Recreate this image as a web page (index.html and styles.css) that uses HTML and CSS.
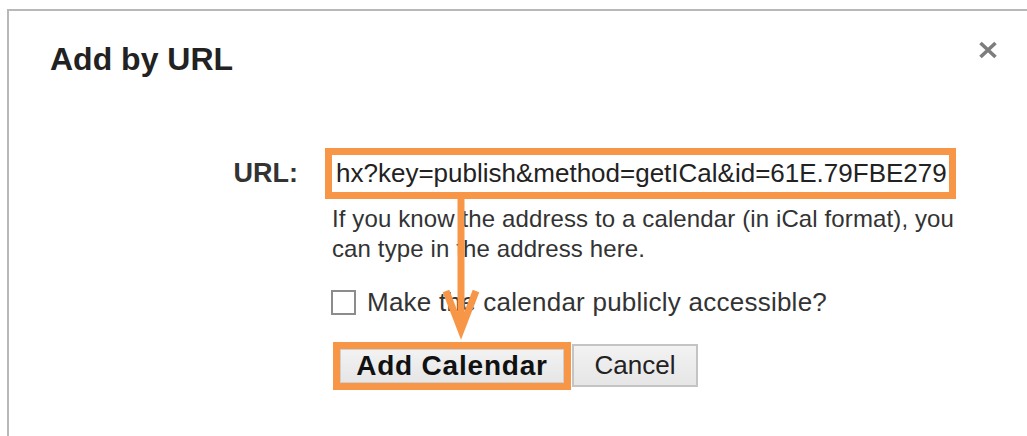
FILE: index.html
```html
<!DOCTYPE html>
<html lang="en">
<head>
<meta charset="utf-8">
<title>Add by URL</title>
<link rel="stylesheet" href="styles.css">
</head>
<body>
  <div class="dialog">
    <div class="dialog-header">
      <h1 class="dialog-title">Add by URL</h1>
      <button class="close" aria-label="Close">
        <svg width="20" height="18" viewBox="0 0 20 18">
          <path d="M2.5 2 L17.5 16 M17.5 2 L2.5 16" stroke="#7d7d7d" stroke-width="3.6" fill="none"/>
        </svg>
      </button>
    </div>

    <form class="url-form">
      <label class="field-label" for="url">URL:</label>
      <div class="url-input highlight" id="url">hx?key=publish&amp;method=getICal&amp;id=61E.79FBE279</div>

      <p class="hint">If you know the address to a calendar (in iCal format), you can type in the address here.</p>

      <label class="check-row">
        <span class="checkbox"></span>
        <span>Make the calendar publicly accessible?</span>
      </label>

      <div class="actions">
        <button type="button" class="btn btn-primary highlight">Add Calendar</button>
        <button type="button" class="btn">Cancel</button>
      </div>
    </form>
  </div>

  <!-- callout arrow from the URL field down to the submit button -->
  <svg class="callout" width="1027" height="436" viewBox="0 0 1027 436">
    <line x1="461" y1="199" x2="461" y2="326" stroke="#f79646" stroke-width="7"/>
    <polyline points="446,291 461,330 476,291" stroke="#f79646" stroke-width="7" fill="none" stroke-linejoin="miter"/>
  </svg>
</body>
</html>
```

FILE: styles.css
```css
* {
  box-sizing: border-box;
}

html, body {
  margin: 0;
  padding: 0;
  background: #ffffff;
  overflow: hidden;
}

body {
  position: relative;
  width: 1027px;
  height: 436px;
  font-family: "Liberation Sans", Arial, sans-serif;
  color: #222222;
}

.dialog {
  margin: 9px 0 0 7px;
  width: 1020px;
  min-height: 440px;
  border-top: 2px solid #b8b8b8;
  border-left: 2px solid #b8b8b8;
  padding: 30px 29px 0 41px;
  background: #ffffff;
}

.dialog-header {
  display: flex;
  justify-content: space-between;
  align-items: flex-start;
}

.dialog-title {
  margin: 0;
  font-size: 32px;
  line-height: 37px;
  font-weight: bold;
  color: #222222;
}

.close {
  border: 0;
  padding: 0;
  margin: 0;
  background: none;
  display: block;
  line-height: 0;
}

.url-form {
  display: grid;
  grid-template-columns: 248px 636px;
  column-gap: 34px;
  margin-top: 77px;
}

.field-label {
  grid-column: 1;
  text-align: right;
  font-size: 27px;
  line-height: 37px;
  font-weight: bold;
  color: #333333;
  align-self: center;
}

.url-input {
  grid-column: 2;
  width: 617px;
  height: 37px;
  padding: 0 4px;
  font-size: 26px;
  line-height: 37px;
  white-space: nowrap;
  overflow: hidden;
  color: #222222;
  background: #ffffff;
}

.highlight {
  outline: 7px solid #f79646;
}

.hint {
  grid-column: 2;
  margin: 12px 0 0 0;
  font-size: 24px;
  line-height: 30px;
  letter-spacing: 0.12px;
  color: #333333;
}

.check-row {
  grid-column: 2;
  display: flex;
  align-items: center;
  gap: 11px;
  margin-top: 23px;
  margin-left: -1px;
  font-size: 26px;
  line-height: 30px;
  letter-spacing: 0.24px;
  color: #333333;
}

.checkbox {
  width: 25px;
  height: 25px;
  border: 2px solid #8c8c8c;
  background: #ffffff;
  flex: none;
}

.actions {
  grid-column: 2;
  display: flex;
  align-items: center;
  gap: 8px;
  margin-top: 27px;
  padding-left: 8px;
}

.btn {
  font-family: "Liberation Sans", Arial, sans-serif;
  font-size: 26px;
  width: 126px;
  height: 43px;
  line-height: 39px;
  padding: 0;
  border: 2px solid #c4c4c4;
  background: linear-gradient(#f2f2f2, #e6e6e6);
  color: #222222;
  margin: 0;
}

.btn-primary {
  width: 224px;
  height: 34px;
  line-height: 32px;
  border: 1px solid #cfcfcf;
  font-size: 28px;
  letter-spacing: 0.8px;
  font-weight: bold;
  color: #111111;
}

.callout {
  position: absolute;
  left: 0;
  top: 0;
  pointer-events: none;
}
```
